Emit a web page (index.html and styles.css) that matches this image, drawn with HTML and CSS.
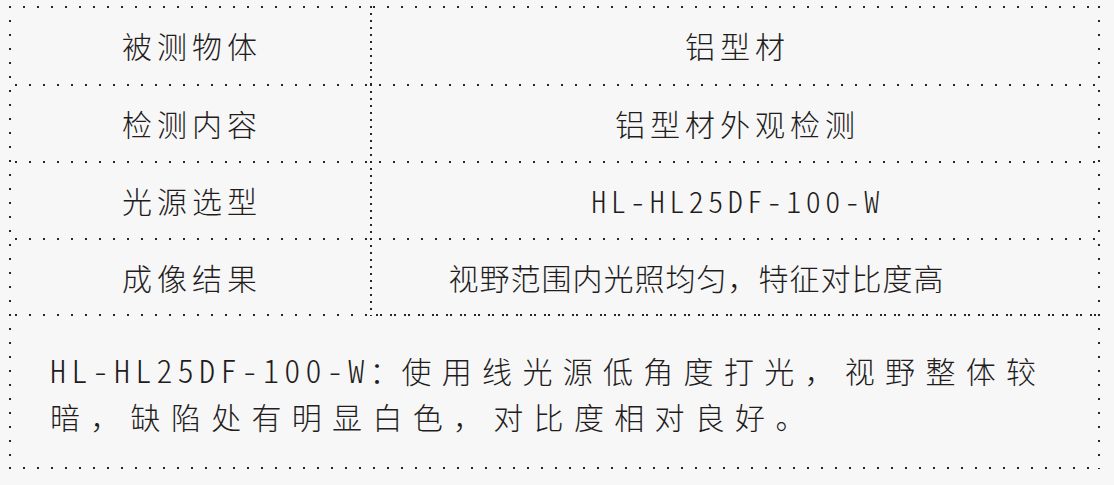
FILE: index.html
```html
<!DOCTYPE html>
<html lang="zh-CN">
<head>
<meta charset="utf-8">
<title>铝型材检测</title>
<link rel="stylesheet" href="styles.css">
</head>
<body>
<div class="sheet">
  <div class="cell key first">被测物体</div>
  <div class="cell val first">铝型材</div>

  <div class="cell key">检测内容</div>
  <div class="cell val">铝型材外观检测</div>

  <div class="cell key">光源选型</div>
  <div class="cell val"><span class="latin">HL-HL25DF-100-W</span></div>

  <div class="cell key last">成像结果</div>
  <div class="cell val last tight">视野范围内光照均匀，特征对比度高</div>

  <div class="note"><p><span class="latin big">HL-HL25DF-100-W</span><span class="colon">：</span>使用线光源低角度打光，视野整体较<br>暗，缺陷处有明显白色，对比度相对良好。</p></div>
</div>
</body>
</html>
```

FILE: styles.css
```css
:root {
  --dot: #2a2626;
  --ink: #231c1c;
}

html, body {
  margin: 0;
  padding: 0;
  background: #f7f7f7;
}

body {
  padding: 6px 0 0 9px;
  font-family: "Noto Sans CJK SC", "Noto Sans", sans-serif;
  font-weight: 300;
  color: var(--ink);
}

.sheet {
  width: 1091px;
  display: grid;
  grid-template-columns: 361px 1fr;
  grid-template-rows: 78px 77px 77px 78px 153px;
  background-image:
    linear-gradient(to bottom, var(--dot) 2px, transparent 2px),
    linear-gradient(to bottom, var(--dot) 2px, transparent 2px),
    linear-gradient(to right, var(--dot) 2px, transparent 2px);
  background-size: 2px 14px, 2px 14px, 14px 2px;
  background-repeat: repeat-y, repeat-y, repeat-x;
  background-position: left 0 top 0, right 0 top 0, left 0 bottom 0;
}

.cell {
  display: flex;
  align-items: center;
  justify-content: center;
  font-size: 30px;
  letter-spacing: 5px;
  text-indent: 5px;
  line-height: 1;
  background-image: linear-gradient(to right, var(--dot) 2px, transparent 2px);
  background-size: 14px 2px;
  background-repeat: repeat-x;
  background-position: 6px 0;
}

.cell.first {
  background-position: 0 0;
}

.val {
  background-image:
    linear-gradient(to right, var(--dot) 2px, transparent 2px),
    linear-gradient(to bottom, var(--dot) 2px, transparent 2px);
  background-size: 14px 2px, 2px 7px;
  background-repeat: repeat-x, repeat-y;
  background-position: 9px 0, 0 0;
}

.val.first {
  background-position: 3px 0, 0 0;
}

.key.last {
  background-image:
    linear-gradient(to right, var(--dot) 2px, transparent 2px),
    linear-gradient(to right, var(--dot) 2px, transparent 2px);
  background-size: 14px 2px, 14px 2px;
  background-repeat: repeat-x, repeat-x;
  background-position: 6px 0, 6px 100%;
}

.val.last {
  background-image:
    linear-gradient(to right, var(--dot) 2px, transparent 2px),
    linear-gradient(to right, var(--dot) 0 2px, transparent 2px 4px, var(--dot) 4px 6px, transparent 6px),
    linear-gradient(to bottom, var(--dot) 2px, transparent 2px);
  background-size: 14px 2px, 14px 2px, 2px 7px;
  background-repeat: repeat-x, repeat-x, repeat-y;
  background-position: 9px 0, 6px 100%, 0 0;
}

.tight {
  letter-spacing: 1px;
  text-indent: 1px;
  padding-right: 78px;
}

.latin {
  font-feature-settings: "hwid" 1;
  font-size: 30px;
  letter-spacing: 4.5px;
}

.note {
  grid-column: 1 / 3;
  display: flex;
  align-items: center;
  padding: 0 20px 0 41px;
}

.note p {
  margin: 0;
  font-size: 30px;
  line-height: 46px;
  letter-spacing: 10.3px;
}

.latin.big {
  font-size: 32px;
  letter-spacing: 5.3px;
}

.colon {
  letter-spacing: 2px;
}
```
